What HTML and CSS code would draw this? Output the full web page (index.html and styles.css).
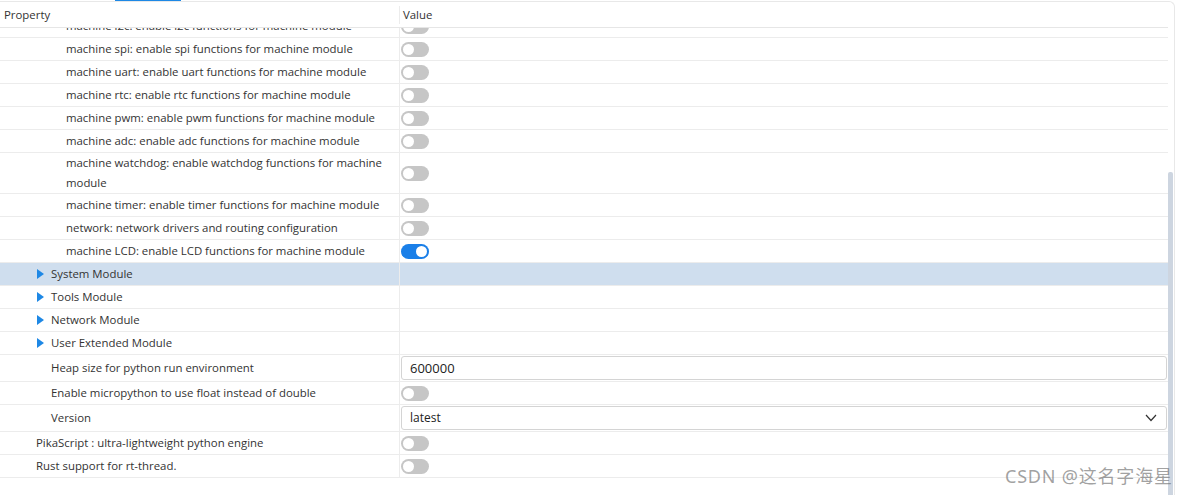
FILE: index.html
```html
<!DOCTYPE html>
<html lang="en">
<head>
    <meta charset="UTF-8">
    <title>Property</title>
    <link rel="stylesheet" href="styles.css">
</head>
<body>
    <div class="tabline"><span class="tab_active"></span></div>
    <div class="panel">
        <div class="grid">
            <div class="head">
                <div class="cell key">Property</div>
                <div class="cell val">Value</div>
            </div>
            <div class="body">
                <div class="list">
                    <div class="row"><div class="cell key lv2">machine i2c: enable i2c functions for machine module</div><div class="cell val"><span class="toggle"></span></div></div>
                    <div class="row"><div class="cell key lv2">machine spi: enable spi functions for machine module</div><div class="cell val"><span class="toggle"></span></div></div>
                    <div class="row"><div class="cell key lv2">machine uart: enable uart functions for machine module</div><div class="cell val"><span class="toggle"></span></div></div>
                    <div class="row"><div class="cell key lv2">machine rtc: enable rtc functions for machine module</div><div class="cell val"><span class="toggle"></span></div></div>
                    <div class="row"><div class="cell key lv2">machine pwm: enable pwm functions for machine module</div><div class="cell val"><span class="toggle"></span></div></div>
                    <div class="row"><div class="cell key lv2">machine adc: enable adc functions for machine module</div><div class="cell val"><span class="toggle"></span></div></div>
                    <div class="row"><div class="cell key lv2 wrap">machine watchdog: enable watchdog functions for machine module</div><div class="cell val"><span class="toggle"></span></div></div>
                    <div class="row"><div class="cell key lv2">machine timer: enable timer functions for machine module</div><div class="cell val"><span class="toggle"></span></div></div>
                    <div class="row"><div class="cell key lv2">network: network drivers and routing configuration</div><div class="cell val"><span class="toggle"></span></div></div>
                    <div class="row"><div class="cell key lv2">machine LCD: enable LCD functions for machine module</div><div class="cell val"><span class="toggle on"></span></div></div>
                    <div class="row selected"><div class="cell key lv1"><span class="arrow"></span>System Module</div><div class="cell val"></div></div>
                    <div class="row"><div class="cell key lv1"><span class="arrow"></span>Tools Module</div><div class="cell val"></div></div>
                    <div class="row"><div class="cell key lv1"><span class="arrow"></span>Network Module</div><div class="cell val"></div></div>
                    <div class="row"><div class="cell key lv1"><span class="arrow"></span>User Extended Module</div><div class="cell val"></div></div>
                    <div class="row tall"><div class="cell key lv1b">Heap size for python run environment</div><div class="cell val"><div class="field">600000</div></div></div>
                    <div class="row"><div class="cell key lv1b">Enable micropython to use float instead of double</div><div class="cell val"><span class="toggle"></span></div></div>
                    <div class="row tall"><div class="cell key lv1b">Version</div><div class="cell val"><div class="field select">latest
                        <svg width="12" height="8" viewBox="0 0 12 8"><polyline points="1,1 6,6.5 11,1" fill="none" stroke="#333" stroke-width="1.2"/></svg>
                    </div></div></div>
                    <div class="row"><div class="cell key lv0">PikaScript : ultra-lightweight python engine</div><div class="cell val"><span class="toggle"></span></div></div>
                    <div class="row"><div class="cell key lv0">Rust support for rt-thread.</div><div class="cell val"><span class="toggle"></span></div></div>
                </div>
            </div>
        </div>
        <div class="scroll"><div class="thumb"></div></div>
    </div>
    <div class="watermark">CSDN @这名字海星</div>
</body>
</html>
```

FILE: styles.css
```css
body{
    margin: 0;
    background-color: #fff;
    font-family: "Open Sans", "Noto Sans", sans-serif;
    font-size: 11.4px;
    color: #333;
    width: 1193px;
    height: 495px;
    overflow: hidden;
    position: relative;
}
.tabline{
    height: 1px;
    position: relative;
}
.tab_active{
    position: absolute;
    left: 115px;
    width: 66px;
    height: 1px;
    background-color: #1e88e5;
}
.panel{
    display: flex;
    width: 1175px;
    height: 494px;
    border-top: 1px solid #e8e8e8;
    border-right: 1px solid #e8e8e8;
    border-top-right-radius: 6px;
    box-sizing: border-box;
}
.grid{
    width: 1168px;
    display: flex;
    flex-direction: column;
}
.head{
    display: flex;
    height: 26px;
    border-bottom: 1px solid #e6e6e6;
    box-sizing: border-box;
}
.head .cell{
    display: flex;
    align-items: center;
}
.head .key{
    padding-left: 4px;
}
.head .val{
    padding-left: 3px;
    border-left: 1px solid #ececec;
    margin-top: 4px;
    margin-bottom: 3px;
    padding-bottom: 1px;
}
.cell.key{
    width: 399px;
    box-sizing: border-box;
    flex-shrink: 0;
}
.cell.val{
    flex: 1;
}
.body{
    flex: 1;
    overflow: hidden;
}
.list{
    margin-top: -13px;
}
.row{
    display: flex;
    min-height: 22px;
    border-bottom: 1px solid #ececec;
}
.row .cell{
    display: flex;
    align-items: center;
    line-height: 20px;
}
.row .val{
    border-left: 1px solid #ececec;
    padding-left: 1px;
}
.row.selected{
    background-color: #cfdeee;
}
.row.tall{
    min-height: 26px;
}
.lv0{ padding-left: 36px; }
.lv1{ padding-left: 37px; }
.lv1b{ padding-left: 51px; }
.lv2{ padding-left: 66px; padding-right: 10px; }
.arrow{
    width: 0;
    height: 0;
    border-top: 5px solid transparent;
    border-bottom: 5px solid transparent;
    border-left: 7px solid #1e88e5;
    margin-right: 7px;
}
.toggle{
    position: relative;
    display: inline-block;
    width: 28px;
    height: 15px;
    border-radius: 8px;
    background-color: #c6c6c6;
}
.toggle::after{
    content: "";
    position: absolute;
    left: 2px;
    top: 2px;
    width: 11px;
    height: 11px;
    border-radius: 50%;
    background-color: #fff;
}
.toggle.on{
    background-color: #1a7fe8;
}
.toggle.on::after{
    left: 15px;
}
.field{
    flex: 1;
    height: 24px;
    margin: 1px 1px 1px 0;
    border: 1px solid #d4d4d4;
    border-radius: 3px;
    box-sizing: border-box;
    display: flex;
    align-items: center;
    padding-left: 8px;
    padding-right: 9px;
    font-size: 13px;
    color: #222;
}
.field.select{
    justify-content: space-between;
    font-size: 12px;
}
.scroll{
    width: 6px;
    position: relative;
}
.thumb{
    position: absolute;
    left: 0;
    right: 1px;
    top: 170px;
    bottom: 0;
    background-color: #cdd5e0;
    border-radius: 2px 2px 0 0;
}
.watermark{
    position: absolute;
    left: 1005px;
    top: 462px;
    font-family: "Noto Sans", "Noto Sans CJK SC", sans-serif;
    font-size: 18px;
    letter-spacing: 0.8px;
    color: rgba(120, 120, 120, 0.7);
}
```
